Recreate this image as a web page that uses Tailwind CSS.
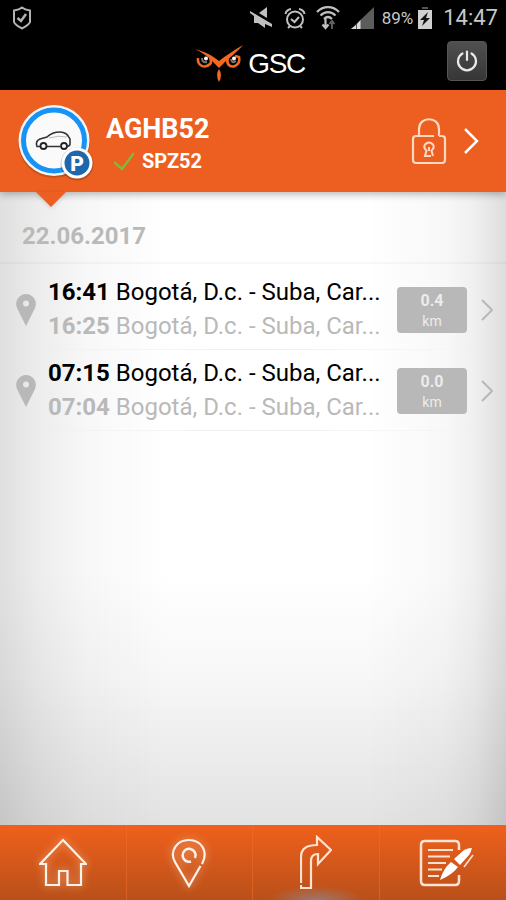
<!DOCTYPE html>
<html lang="es">
<head>
<meta charset="utf-8">
<meta name="viewport" content="width=device-width, initial-scale=1">
<title>GSC</title>
<script src="https://cdn.jsdelivr.net/npm/@tailwindcss/browser@4"></script>
</head>
<body class="flex min-h-screen flex-col bg-black font-['Roboto',sans-serif]">

<div class="flex h-9 items-center justify-between pr-2 pl-3 text-[#c8c8c8]">
  <svg class="h-6 w-5" viewBox="0 0 20 24" fill="none" stroke="#b4b4b4" stroke-width="2"><path d="M10 1.500C7.500 3.500 5 4 2 4.500V16C3 19 7 20.500 10 22.500C13 20.500 17 19 18 16V4.500C15 4 12.500 3.500 10 1.500Z"/><path d="M5.500 12L9 15L14 8" stroke-width="2.500"/></svg>
  <div class="flex items-center">
    <svg class="mr-3 h-6 w-[22px]" viewBox="0 0 22 24" fill="#c0c0c0"><path d="M17 1V12L9 7Z"/><path d="M0 5L22 18V21L15 18V22L8 17H4V10L0 7Z"/></svg>
    <svg class="mr-2.5 h-6 w-[22px]" viewBox="0 0 22 24" fill="none" stroke="#c0c0c0" stroke-width="2"><circle cx="11" cy="13.500" r="8"/><path d="M1.500 8C2 5 4 3.500 7 3M20.500 8C20 5 18 3.500 15 3M4 22L6 20M18 22L16 20M7 13L10.500 16L15 11"/></svg>
    <svg class="mr-2.5 h-6 w-6" viewBox="0 0 24 24" fill="none" stroke="#c0c0c0" stroke-width="2.200"><path d="M1 6C7-.5 17-.5 23 6M4.500 9.500C9 5 15 5 19.500 9.500M8 13C10.500 10.500 13.500 10.500 16 13"/><path d="M9.500 13V22M6.500 18.500L9.500 22L12.500 18.500"/><path d="M16 23V15M13.500 18L16 15L18.500 18" stroke="#666" stroke-width="1.800"/></svg>
    <svg class="mr-2 h-6 w-6" viewBox="0 0 24 24"><path d="M1 23L24 1V23Z" fill="#5c5c5c"/><path d="M1 23L6 19V23ZM7 18L10.500 14V23H7Z" fill="#ddd"/></svg>
    <span class="mr-1 text-[17px] leading-6">89%</span>
    <svg class="mr-2.5 h-6 w-4" viewBox="0 0 16 24"><path d="M5 1H11V3H5Z" fill="#555"/><path d="M1 4H15V23H1Z" fill="#d0d0d0"/><path d="M11 6L3 14H7L5 20L13 12H9Z" fill="#111"/></svg>
    <span class="text-[22px] leading-6">14:47</span>
  </div>
</div>

<header class="grid h-[54px] grid-cols-[1fr_auto_1fr] items-center pr-[19px] pb-1 pl-3">
  <div></div>
  <div class="flex items-center gap-1 pt-1.5">
    <svg class="h-10 w-[50px]" viewBox="0 0 50 40"><path d="M1 5C12 8 19 12 25 17C31 12 39 7 49 1C42 9 34 15 29 20L25 24L21 20C15 13 9 9 1 5Z" fill="#f26722"/><path d="M4 14C3 22 11 25 16 20C18 18 17 16 16 14M34 14C32 19 35 24 41 22C45 20 46 17 45 13L41 12" fill="none" stroke="#f26722" stroke-width="2.600"/><path d="M8 14Q8 19 13 18" fill="none" stroke="#777" stroke-width="2"/><path d="M37 15Q38 20 42 17" fill="none" stroke="#777" stroke-width="2"/><circle cx="12" cy="14.500" r="2" fill="#fff"/><circle cx="40" cy="14.500" r="2" fill="#fff"/><path d="M25 25Q29 31 25 38Q21 31 25 25Z" fill="#f26722"/></svg>
    <span class="font-['Liberation_Sans',sans-serif] text-[28px] leading-10 tracking-tighter text-white">GSC</span>
  </div>
  <button type="button" aria-label="Cerrar sesión" class="flex size-10 items-center justify-center justify-self-end rounded-sm border border-[#555] bg-linear-to-b from-[#505050] to-[#363636]">
    <svg class="size-6" viewBox="0 0 24 24" fill="none" stroke="#e8e8e8" stroke-width="2.200" stroke-linecap="round"><path d="M12 2.500V11"/><path d="M7.500 4.500A9 9 0 1 0 16.500 4.500"/></svg>
  </button>
</header>

<main class="relative flex flex-1 flex-col bg-white bg-[linear-gradient(to_right,#00000020,#00000012_8%,#00000008_17%,#00000000_33%,#00000000_72%,#00000007_88%,#00000010_94%,#00000022),linear-gradient(to_bottom,#ffffff_66%,#f7f7f7_80%,#e2e2e2)]">
  <section class="relative z-10 flex h-[102px] items-center bg-[#ec5f20] pr-[27px] pl-4 shadow-[0_2px_8px_rgba(0,0,0,0.3)]">
    <svg class="size-20 shrink-0" viewBox="0 0 80 80">
      <circle cx="38" cy="41" r="36" fill="#000" opacity=".15"/>
      <circle cx="38" cy="39.500" r="35.500" fill="#f4f4f4"/>
      <circle cx="38" cy="39.500" r="30.500" fill="#fafafa" stroke="#1693f5" stroke-width="5"/>
      <path d="M24 45.500H21Q19 40 24 38L31 36Q36 31 44 31Q51 31 54 38V43Q54 45 51 45.500M31 45.500H44" fill="none" stroke="#333" stroke-width="1.600"/>
      <path d="M33 37Q42 34 51 36" stroke="#bbb" fill="none"/>
      <circle cx="27.500" cy="45" r="3" fill="none" stroke="#222" stroke-width="1.800"/><circle cx="48" cy="45" r="3" fill="none" stroke="#222" stroke-width="1.800"/>
      <circle cx="61" cy="63" r="16.500" fill="#000" opacity=".2"/>
      <circle cx="61" cy="62" r="15.500" fill="#fff"/><circle cx="61" cy="62" r="12.500" fill="#1f67ad"/>
      <text x="61" y="69.500" text-anchor="middle" font-family="Roboto,sans-serif" font-weight="900" font-size="21" fill="#fff">P</text>
    </svg>
    <div class="ml-[10px] flex-1 pt-2 text-white">
      <h1 class="text-[27px] leading-8 font-bold">AGHB52</h1>
      <p class="flex items-center gap-2 pl-2 text-xl leading-8 font-bold">
        <svg class="h-5 w-5" viewBox="0 0 20 20" fill="none" stroke="#83b83b" stroke-width="2.500"><path d="M0 11L8 18L20 2"/></svg>SPZ52</p>
    </div>
    <svg class="mr-4 h-12 w-9" viewBox="0 0 36 48" fill="none" stroke="#ffd9c4" stroke-width="2.200"><path d="M8 19V12C8-1 28-1 28 12V19"/><path d="M23 19H5Q2 19 2 22V43Q2 46 5 46H31Q34 46 34 43V22Q34 19 31 19H28"/><path d="M20 39H14L15.500 33.500Q12 30.500 14 27.500Q18 23.500 22 27.500Q24 30.500 20.500 33.500L22 39M18 34V30" stroke-width="2"/></svg>
    <a href="#" aria-label="Detalles del vehículo"><svg class="h-7 w-4" viewBox="0 0 16 28" fill="none" stroke="#fff" stroke-width="2.500"><path d="M2 2L14 14L2 26"/></svg></a>
    <svg class="absolute top-full left-9 h-4 w-[30px] drop-shadow-sm" viewBox="0 0 30 16"><path d="M0 0H30L15 15Z" fill="#ec5f20"/></svg>
  </section>

  <h2 class="border-b-2 border-black/3 pt-7 pb-2.5 pl-[22px] text-2xl leading-8 font-bold text-[#b9b9b9]">22.06.2017</h2>

  <ul class="pt-[5px]">
    <li class="relative flex h-[81px] items-center pr-[13px] pl-4">
      <svg class="h-8 w-5 shrink-0" viewBox="0 0 20 32"><path fill-rule="evenodd" d="M10 0A10 10 0 0 1 19 14L10 32L1 14A10 10 0 0 1 10 0ZM10 6.500A3 3 0 1 0 10 12.500A3 3 0 1 0 10 6.500Z" fill="#b8b8b8"/></svg>
      <div class="ml-3 min-w-0 flex-1 pb-px text-2xl leading-[34px] whitespace-nowrap">
        <p class="text-black"><b>16:41</b> Bogotá, D.c. - Suba, Car...</p>
        <p class="text-[#b9b9b9]"><b>16:25</b> Bogotá, D.c. - Suba, Car...</p>
      </div>
      <div class="mr-3.5 h-[46px] w-[70px] shrink-0 rounded-sm bg-[#b8b8b8] pt-1 text-center text-[#ececec]"><b class="block text-base leading-5">0.4</b><span class="block text-sm leading-5">km</span></div>
      <a href="#" aria-label="Ver viaje 16:41"><svg class="h-6 w-3" viewBox="0 0 12 24" fill="none" stroke="#b8b8b8" stroke-width="2"><path d="M1 2L11 12L1 22"/></svg></a>
      <span class="absolute right-6 bottom-0 left-9 h-px bg-linear-to-r from-black/0 via-black/7 to-black/0"></span>
    </li>
    <li class="relative flex h-[81px] items-center pr-[13px] pl-4">
      <svg class="h-8 w-5 shrink-0" viewBox="0 0 20 32"><path fill-rule="evenodd" d="M10 0A10 10 0 0 1 19 14L10 32L1 14A10 10 0 0 1 10 0ZM10 6.500A3 3 0 1 0 10 12.500A3 3 0 1 0 10 6.500Z" fill="#b8b8b8"/></svg>
      <div class="ml-3 min-w-0 flex-1 pb-px text-2xl leading-[34px] whitespace-nowrap">
        <p class="text-black"><b>07:15</b> Bogotá, D.c. - Suba, Car...</p>
        <p class="text-[#b9b9b9]"><b>07:04</b> Bogotá, D.c. - Suba, Car...</p>
      </div>
      <div class="mr-3.5 h-[46px] w-[70px] shrink-0 rounded-sm bg-[#b8b8b8] pt-1 text-center text-[#ececec]"><b class="block text-base leading-5">0.0</b><span class="block text-sm leading-5">km</span></div>
      <a href="#" aria-label="Ver viaje 07:15"><svg class="h-6 w-3" viewBox="0 0 12 24" fill="none" stroke="#b8b8b8" stroke-width="2"><path d="M1 2L11 12L1 22"/></svg></a>
      <span class="absolute right-6 bottom-0 left-9 h-px bg-linear-to-r from-black/0 via-black/7 to-black/0"></span>
    </li>
  </ul>
</main>

<nav class="grid h-[75px] grid-cols-4 divide-x divide-[#f07030]/50 bg-linear-to-b from-[#f0601c] to-[#b95019]">
  <a href="#" aria-label="Inicio" class="flex items-center justify-center"><svg class="h-[50px] w-12 drop-shadow-[0_0_4px_rgba(255,220,190,0.7)]" viewBox="0 0 48 50" fill="none" stroke="#fff2e8" stroke-width="2.200"><path d="M24 2L47 26H42V47H28.500V33H20V47H7V26H1Z"/></svg></a>
  <a href="#" aria-label="Mapa" class="flex items-center justify-center"><svg class="h-[50px] w-9 drop-shadow-[0_0_4px_rgba(255,220,190,0.7)]" viewBox="0 0 36 50" fill="none" stroke="#fff2e8" stroke-width="2.200"><path d="M31 26C38 13 30 2 18 2C6 2-2 13 4 24L18 48L29.500 28"/><path d="M20 23.500A6.500 6.500 0 1 1 24 20" stroke-width="2.500"/></svg></a>
  <a href="#" aria-label="Rutas" class="flex items-start justify-center bg-[radial-gradient(ellipse_48px_14px_at_50%_100%,#9c7770,#9c777000)] pt-2.5"><svg class="h-[54px] w-8" viewBox="0 0 32 54" fill="none" stroke="#ffe3d2" stroke-width="2.200"><path d="M1 48V22Q1 10 17 10V2L31 15L18 29V19Q11 19 11 26V53H1V50"/></svg></a>
  <a href="#" aria-label="Informes" class="flex items-center justify-center pl-2"><svg class="h-12 w-14" viewBox="0 0 56 48" fill="none" stroke="#ffe3d2" stroke-width="2.500"><path d="M40 11V6Q40 2 36 2H6Q2 2 2 6V42Q2 46 6 46H36Q40 46 40 42V36"/><path d="M9 11H34M9 17.500H31M9 24H27M9 30.500H23M9 37H20" stroke-width="2"/><path d="M21 41Q24 30 32 23L39 28Q33 36 21 41Z" fill="#fff" stroke="none"/><path d="M35 20L45 11Q49 9 53 9Q52 13 50 16L41 26Z" fill="#fff" stroke="none"/><path d="M54 16L45 28" stroke-width="1.500"/></svg></a>
</nav>
</body>
</html>
